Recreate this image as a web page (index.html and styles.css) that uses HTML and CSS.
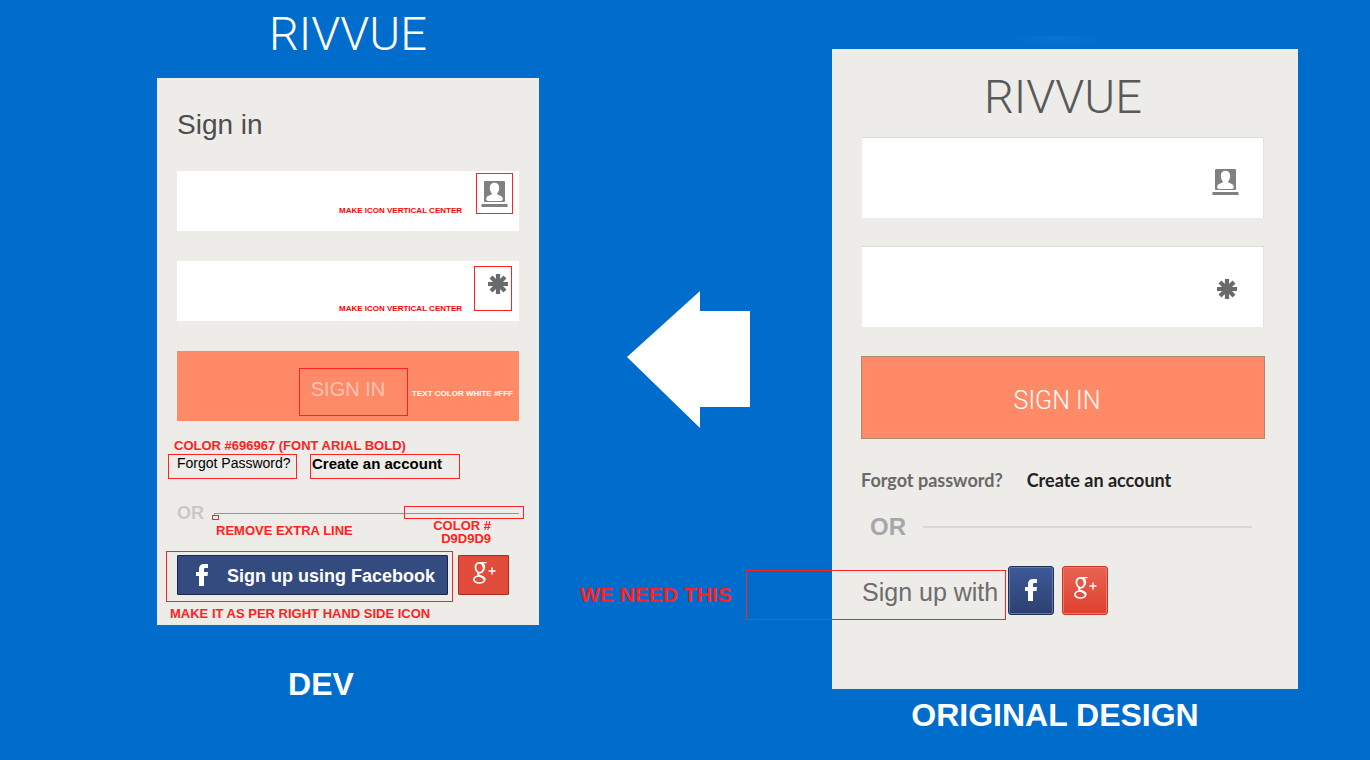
FILE: index.html
```html
<!DOCTYPE html>
<html lang="en">
<head>
<meta charset="utf-8">
<title>Rivvue sign in review</title>
<link rel="stylesheet" href="styles.css">
</head>
<body>
<svg class="defs" aria-hidden="true">
  <symbol id="user" viewBox="0 0 28 27">
    <path fill="#808080" d="M4 0h19a1 1 0 0 1 1 1v19a1 1 0 0 1-1 1H4a1 1 0 0 1-1-1V1a1 1 0 0 1 1-1zM.5 23h26v3H.5z"/>
    <path fill="#fff" d="M13.500 1.800c3 0 4.700 2 4.700 5.200 0 2-.7 3.700-1.900 5v1.600c1.200.8 5.500 1.200 5.500 4.600 0 1.200-.8 1.700-2.200 1.700H7.400c-1.400 0-2.200-.5-2.200-1.700 0-3.400 4.300-3.800 5.500-4.600V12c-1.200-1.300-1.900-3-1.900-5 0-3.200 1.700-5.200 4.700-5.200z"/>
  </symbol>
  <symbol id="star" viewBox="0 0 20 20">
    <path stroke="#6a6a6a" stroke-width="4.200" fill="none" d="M10 0v20M0 10h20M3 3l14 14M17 3L3 17"/>
  </symbol>
  <symbol id="fb" viewBox="0 0 12 22">
    <path fill="#fff" d="M12 0v4H9.500C8.300 4 8 4.500 8 5.500V8h4l-.5 4H8v10H3V12H0V8h3V5c0-3.300 2-5 5-5z"/>
  </symbol>
  <symbol id="gp" viewBox="0 0 23 22">
    <g fill="none" stroke="#fff">
      <ellipse cx="6.500" cy="5.800" rx="4" ry="5" stroke-width="1.700" transform="rotate(-12 6.500 5.800)"/>
      <path stroke-width="1.300" d="M6 .7h7.500M9 1c2.300 1.300 2.800 3 2.500 4.800-.3 2-1.700 2.900-2.800 3.800"/>
      <path stroke-width="1.900" d="M6 10.500c-1.800 1.500-.8 2.500.7 3.400 2 1.100 4.800 1.700 5 3.900"/>
      <ellipse cx="6.300" cy="17.500" rx="5.400" ry="3.500" stroke-width="1.700"/>
      <path stroke-width="1.500" d="M19 5.500v7M15.500 9h7"/>
    </g>
  </symbol>
</svg>

<main class="board">
  <section class="dev">
    <h1 class="logo">RIVVUE</h1>
    <form class="panel dev-panel">
      <h2 class="title">Sign in</h2>
      <div class="field dev-field">
        <input type="text" aria-label="Username">
        <svg class="icon-user"><use href="#user"/></svg>
        <span class="note note-small">MAKE ICON VERTICAL CENTER</span>
        <span class="mark mark-user"></span>
      </div>
      <div class="field dev-field">
        <input type="password" aria-label="Password">
        <svg class="icon-star"><use href="#star"/></svg>
        <span class="note note-small note-low">MAKE ICON VERTICAL CENTER</span>
        <span class="mark mark-star"></span>
      </div>
      <div class="field submit">
        <button type="button">SIGN IN</button>
        <span class="mark mark-submit"></span>
        <span class="note note-small note-white">TEXT COLOR WHITE #FFF</span>
      </div>
      <p class="note note-color">COLOR #696967 (FONT ARIAL BOLD)</p>
      <div class="dev-links">
        <a class="forgot" href="#">Forgot Password?</a>
        <a class="create" href="#">Create an account</a>
      </div>
      <div class="divider dev-divider">
        <span>OR</span><i class="line"></i>
        <span class="mark mark-tick"></span>
        <span class="mark mark-line"></span>
        <span class="note note-remove">REMOVE EXTRA LINE</span>
        <span class="note note-grey">COLOR #<br>D9D9D9</span>
      </div>
      <div class="dev-social">
        <button class="facebook" type="button"><svg class="icon-fb"><use href="#fb"/></svg><span>Sign up using Facebook</span></button>
        <button class="google" type="button" aria-label="Google Plus"><svg class="icon-gp"><use href="#gp"/></svg></button>
        <span class="mark mark-social"></span>
      </div>
      <p class="note note-social">MAKE IT AS PER RIGHT HAND SIDE ICON</p>
    </form>
    <p class="caption">DEV</p>
  </section>

  <section class="middle">
    <svg class="arrow" viewBox="0 0 123 137"><path fill="#fff" d="M0 66L73 0v20h50v96H73v21z"/></svg>
    <p class="note need">WE NEED THIS</p>
  </section>

  <section class="design">
    <form class="panel design-panel">
      <h1 class="logo dark">RIVVUE</h1>
      <div class="field design-field">
        <input type="text" aria-label="Username">
        <svg class="icon-user"><use href="#user"/></svg>
      </div>
      <div class="field design-field">
        <input type="password" aria-label="Password">
        <svg class="icon-star"><use href="#star"/></svg>
      </div>
      <button class="design-submit" type="button">SIGN IN</button>
      <div class="design-links">
        <a href="#">Forgot password?</a>
        <a class="strong" href="#">Create an account</a>
      </div>
      <div class="divider design-divider"><span>OR</span><i class="line"></i></div>
      <div class="design-social">
        <span class="with">Sign up with</span>
        <button class="facebook" type="button" aria-label="Facebook"><svg class="icon-fb"><use href="#fb"/></svg></button>
        <button class="google" type="button" aria-label="Google Plus"><svg class="icon-gp"><use href="#gp"/></svg></button>
        <span class="mark mark-with"></span>
      </div>
    </form>
    <p class="caption">ORIGINAL DESIGN</p>
  </section>
</main>
</body>
</html>
```
FILE: styles.css
```css
* { box-sizing: border-box; }

body {
  margin: 0;
  min-height: 100vh;
  background: #006dcc;
  font-family: "Liberation Sans", Arial, sans-serif;
}

h1, h2, p { margin: 0; }
.defs { position: absolute; width: 0; height: 0; }
svg { display: block; flex: none; }
a { color: inherit; text-decoration: none; }
button, input { font-family: inherit; border: 0; margin: 0; padding: 0; }

.board {
  display: grid;
  grid-template-columns: 382fr 293fr 466fr;
  padding: 0 72px 0 157px;
}

.logo {
  font: 300 47px/56px Roboto, sans-serif;
  color: #fff;
  text-align: center;
}
.logo.dark { color: #58595b; }

.panel {
  display: flex;
  flex-direction: column;
  background: #edece8;
}

.caption {
  font-size: 32px;
  line-height: 36px;
  font-weight: bold;
  color: #fff;
  text-align: center;
}

.note { color: #f22; font-size: 13px; line-height: 16px; font-weight: bold; white-space: nowrap; }
.note-small { position: absolute; right: 57px; top: 35px; font-size: 8px; line-height: 10px; color: #f00; }
.note-low { top: 43px; }
.note-white { right: 6px; top: 38px; color: #fff; }
.mark { position: absolute; border: 1px solid #f22; pointer-events: none; }

.icon-user { width: 28px; height: 27px; }
.icon-star { width: 20px; height: 20px; }
.icon-fb { width: 12px; height: 22px; }
.icon-gp { width: 23px; height: 22px; }

.field { position: relative; display: flex; background: #fff; }
.field input { flex: 1; min-width: 0; background: transparent; font-size: 16px; padding-left: 16px; outline: 0; }

/* Development build */
.dev .logo { padding: 6px 0 16px; }
.dev-panel { padding: 31px 20px 3px; }
.title { font-size: 28px; line-height: 32px; font-weight: normal; color: #4d4d4f; margin-bottom: 30px; }
.dev-field { height: 60px; margin-bottom: 30px; padding: 10px; }
.dev-field .icon-star { margin: 3px 1px 0 0; }
.mark-user { right: 6px; top: 2px; width: 37px; height: 41px; }
.mark-star { right: 7px; top: 5px; width: 38px; height: 45px; }
.submit { height: 70px; background: #ff8a68; margin-bottom: 17px; }
.submit button { flex: 1; background: transparent; color: #f9c4b3; font-size: 20px; line-height: 24px; padding-top: 6px; }
.mark-submit { left: 122px; top: 17px; width: 109px; height: 48px; }
.note-color { margin-left: -3px; }
.dev-links { display: flex; gap: 13px; margin-left: -9px; }
.dev-links a { height: 25px; border: 1px solid #f22; line-height: 17px; white-space: nowrap; color: #000; }
.dev-links .forgot { width: 129px; padding-left: 8px; font-size: 14px; }
.dev-links .create { width: 150px; padding-left: 1px; font-size: 15px; font-weight: bold; }

.divider { position: relative; display: flex; align-items: center; font-weight: bold; }
.divider .line { flex: 1; }
.dev-divider { margin-top: 24px; height: 20px; gap: 10px; font-size: 18px; color: #c9c9c7; }
.dev-divider .line { height: 2px; margin-top: 2px; border-top: 1px solid #939496; border-left: 1px solid #939496; }
.mark-tick { left: 35px; top: 12px; width: 7px; height: 5px; }
.mark-line { right: -5px; top: 3px; width: 120px; height: 13px; }
.note-remove { position: absolute; left: 39px; top: 20px; }
.note-grey { position: absolute; right: 28px; top: 16px; line-height: 13px; text-align: right; }

.dev-social { position: relative; display: flex; gap: 10px; margin-top: 32px; }
.dev-social button { height: 40px; border-radius: 1px; display: flex; align-items: center; }
.dev-social .facebook { width: 271px; padding-left: 18px; gap: 19px; background: #344b80; border: 1px solid #1a2848; color: #fff; font-size: 18px; font-weight: bold; white-space: nowrap; }
.dev-social .facebook span { padding-top: 2px; }
.dev-social .google { width: 51px; padding: 0 0 5px 14px; background: #e24c3b; border: 1px solid #a92d20; }
.mark-social { left: -11px; top: -4px; width: 287px; height: 51px; }
.note-social { margin: 11px 0 0 -7px; }
.dev .caption { padding: 41px 54px 0 0; }

/* Arrow between the two versions */
.middle { padding-top: 291px; }
.arrow { width: 123px; height: 137px; margin-left: 88px; }
.need { margin: 155px 0 0 41px; font-size: 21px; line-height: 24px; }

/* Approved design */
.design { padding-top: 49px; position: relative; }
.design::before {
  content: "";
  position: absolute;
  left: 180px;
  top: 36px;
  width: 90px;
  height: 12px;
  background: radial-gradient(ellipse at top, #0d73d2, #006dcc 70%);
}
.design-panel { padding: 20px 33px 74px 29px; }
.design .logo { padding-bottom: 12px; }
.design-field { height: 81px; margin: 0 1px 28px 1px; padding: 0 23px 0 0; align-items: center; border-top: 1px solid #dddcd6; border-right: 1px solid #e3e2dd; }
.design-field input { align-self: stretch; }
.design-field .icon-user { margin-top: 8px; }
.design-field .icon-star { margin: 4px 3px 0 0; }
.design-submit { height: 83px; margin-top: 1px; background: #ff8a68; border: 1px solid #b08878; color: #fff; font: 300 25px/32px Roboto, sans-serif; padding: 6px 12px 0 0; }
.design-links { display: flex; gap: 24px; margin-top: 29px; font: 700 18px/24px Lato, sans-serif; color: #696967; white-space: nowrap; }
.design-links .strong { color: #222; }
.design-divider { margin: 21px 13px 0 9px; height: 28px; gap: 17px; font-size: 24px; color: #a5a7aa; }
.design-divider .line { height: 2px; background: #d8d8da; }
.design-social { position: relative; display: flex; align-items: center; margin-top: 25px; gap: 8px; }
.with { width: 139px; padding-left: 1px; padding-top: 3px; font-size: 25px; line-height: 32px; color: #6d6d6d; white-space: nowrap; }
.design-social button { width: 46px; height: 49px; border-radius: 3px; display: flex; align-items: center; justify-content: center; padding-bottom: 1px; }
.design-social .facebook { background: linear-gradient(#3d5a98, #2c4170); border: 1px solid #1e2e54; box-shadow: inset 0 0 0 1px #6079ad; }
.design-social .google { background: linear-gradient(#e86353, #df402d); border: 1px solid #c83526; box-shadow: inset 0 0 0 1px #ee7769; padding-bottom: 5px; }
.mark-with { left: -115px; top: 4px; width: 260px; height: 50px; }
.design .caption { padding: 8px 20px 0 0; }
```
